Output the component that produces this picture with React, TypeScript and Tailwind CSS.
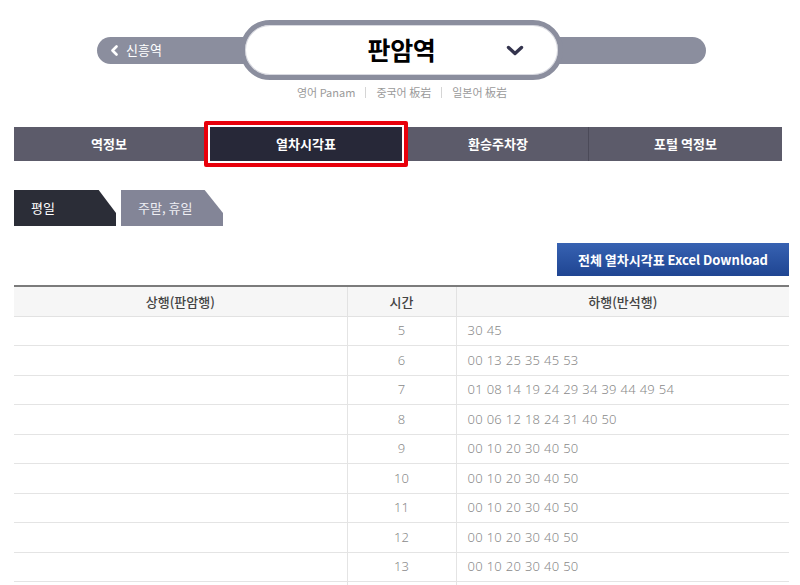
import React from 'react';

// 판암역 열차시각표 화면
const ROWS: { hour: number | null; up: string; down: string }[] = [
  { hour: 5, up: '', down: '30 45' },
  { hour: 6, up: '', down: '00 13 25 35 45 53' },
  { hour: 7, up: '', down: '01 08 14 19 24 29 34 39 44 49 54' },
  { hour: 8, up: '', down: '00 06 12 18 24 31 40 50' },
  { hour: 9, up: '', down: '00 10 20 30 40 50' },
  { hour: 10, up: '', down: '00 10 20 30 40 50' },
  { hour: 11, up: '', down: '00 10 20 30 40 50' },
  { hour: 12, up: '', down: '00 10 20 30 40 50' },
  { hour: 13, up: '', down: '00 10 20 30 40 50' },
  { hour: null, up: '', down: '' },
];

const TABS = ['역정보', '열차시각표', '환승주차장', '포털 역정보'];

function StationHeader() {
  return (
    <div className="pt-[20px]">
      <div className="relative h-[60px] flex items-center">
        <div className="ml-[97px] w-[609px] h-[27px] rounded-full bg-[#8b8e9e] flex items-center pl-[13px] gap-[7px] text-white text-[13px]">
          <svg width="9" height="11" viewBox="0 0 9 11">
            <polyline points="6.5,1.5 2.5,5.5 6.5,9.5" fill="none" stroke="white" strokeWidth="2.6" strokeLinecap="round" strokeLinejoin="round" />
          </svg>
          <span>신흥역</span>
        </div>
        <div className="absolute left-[240px] top-0 w-[323px] h-[60px] rounded-full border-[5px] border-[#8b8e9e] bg-white shadow-[inset_0_0_0_1px_#d8d9e0] flex items-center justify-center">
          <span className="text-[25px] font-bold text-black tracking-[-0.3px]">판암역</span>
          <svg className="absolute right-[34px] top-[20px]" width="18" height="11" viewBox="0 0 18 11">
            <polyline points="2.5,2.5 9,8.5 15.5,2.5" fill="none" stroke="#34344e" strokeWidth="3.4" strokeLinecap="round" strokeLinejoin="round" />
          </svg>
        </div>
      </div>
      <div className="mt-[4px] flex justify-center items-center text-[11px] text-[#9a9a9a] leading-[16px] pl-[4px]">
        <span>영어 Panam</span>
        <span className="mx-[10px] w-px h-[11px] bg-[#d5d5d5]" />
        <span>중국어 板岩</span>
        <span className="mx-[10px] w-px h-[11px] bg-[#d5d5d5]" />
        <span>일본어 板岩</span>
      </div>
    </div>
  );
}

function MenuTabs() {
  return (
    <div className="mt-[21px] ml-[14px] flex items-center h-[46px] text-white text-[13px] font-bold">
      <div className="w-[190px] h-[34px] bg-[#5c5b6a] flex items-center justify-center">{TABS[0]}</div>
      <div className="w-[204px] h-[46px] border-[4px] border-[#e8000b] rounded-[2px] p-[2px]">
        <div className="w-full h-full bg-[#272838] flex items-center justify-center">{TABS[1]}</div>
      </div>
      <div className="w-[181px] h-[34px] bg-[#5c5b6a] border-r border-[#4b4a58] flex items-center justify-center">{TABS[2]}</div>
      <div className="w-[193px] h-[34px] bg-[#5c5b6a] flex items-center justify-center">{TABS[3]}</div>
    </div>
  );
}

function DayTabs() {
  return (
    <div className="mt-[23px] ml-[14px] flex gap-[5px] text-[13px]">
      <div className="w-[102px] h-[36px] bg-[#2b2d37] text-white flex items-center pl-[17px] [clip-path:polygon(0_0,83%_0,100%_64%,100%_100%,0_100%)]">
        평일
      </div>
      <div className="w-[102px] h-[36px] bg-[#838597] text-[#eeeef3] flex items-center pl-[17px] [clip-path:polygon(0_0,82%_0,100%_64%,100%_100%,0_100%)]">
        주말, 휴일
      </div>
    </div>
  );
}

export default function App() {
  return (
    <div className="w-[800px] h-[585px] overflow-hidden bg-white [font-family:'Noto_Sans_CJK_KR','Noto_Sans',sans-serif]">
      <StationHeader />
      <MenuTabs />
      <DayTabs />

      <div className="mt-[17px] flex justify-end pr-[11px]">
        <button className="w-[232px] h-[33px] bg-gradient-to-b from-[#3762b2] to-[#1f4592] text-white text-[13px] font-semibold">
          전체 열차시각표 Excel Download
        </button>
      </div>

      <table className="mt-[9px] ml-[14px] w-[775px] border-collapse table-fixed">
        <colgroup>
          <col className="w-[333px]" />
          <col className="w-[109px]" />
          <col className="w-[333px]" />
        </colgroup>
        <thead>
          <tr className="h-[30px] bg-[#f6f6f6] border-t-2 border-[#7b7b7b] text-[13px] text-[#444]">
            <th className="font-medium border-b border-[#e2e2e2]">상행(판암행)</th>
            <th className="font-medium border-b border-l border-[#e2e2e2]">시간</th>
            <th className="font-medium border-b border-l border-[#e2e2e2]">하행(반석행)</th>
          </tr>
        </thead>
        <tbody className="text-[13px] text-[#8a8a8a] font-light [font-family:'Noto_Sans',sans-serif]">
          {ROWS.map((row, i) => (
            <tr key={i} className="h-[29.5px]">
              <td className="border-b border-[#e4e4e4]">{row.up}</td>
              <td className="border-b border-l border-[#e4e4e4] text-center">{row.hour}</td>
              <td className="border-b border-l border-[#e4e4e4] pl-[11px] tracking-[0.3px]">{row.down}</td>
            </tr>
          ))}
        </tbody>
      </table>
    </div>
  );
}
